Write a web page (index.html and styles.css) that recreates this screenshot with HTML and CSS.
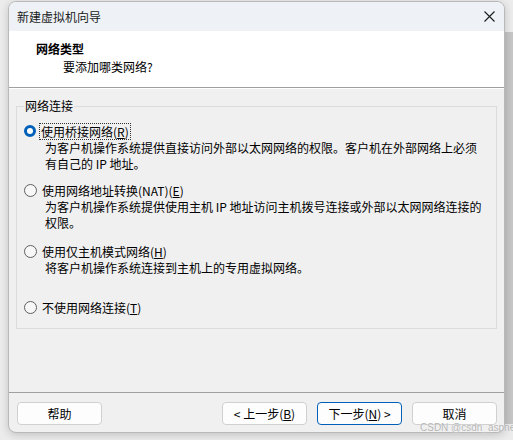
FILE: index.html
```html
<!DOCTYPE html>
<html lang="zh">
<head>
<meta charset="utf-8">
<link rel="stylesheet" href="styles.css">
</head>
<body>
<div class="backdrop-strip"></div>
<div class="dialog">
  <div class="titlebar">
    <span class="title">新建虚拟机向导</span>
    <svg class="close" width="11" height="11" viewBox="0 0 11 11"><path d="M0.5 0.5 L10.5 10.5 M10.5 0.5 L0.5 10.5" stroke="#1a1a1a" stroke-width="1.1" fill="none"/></svg>
  </div>
  <div class="header">
    <div class="h-title">网络类型</div>
    <div class="h-sub">要添加哪类网络?</div>
  </div>
  <div class="body">
    <fieldset class="group">
      <legend>网络连接</legend>
      <div class="opt opt1">
        <div class="opt-line"><span class="radio checked"></span><span class="label focus">使用桥接网络(<u>R</u>)</span></div>
        <div class="desc">为客户机操作系统提供直接访问外部以太网网络的权限。客户机在外部网络上必须<br>有自己的 IP 地址。</div>
      </div>
      <div class="opt opt2">
        <div class="opt-line"><span class="radio"></span><span class="label">使用网络地址转换(NAT)(<u>E</u>)</span></div>
        <div class="desc">为客户机操作系统提供使用主机 IP 地址访问主机拨号连接或外部以太网网络连接的<br>权限。</div>
      </div>
      <div class="opt opt3">
        <div class="opt-line"><span class="radio"></span><span class="label">使用仅主机模式网络(<u>H</u>)</span></div>
        <div class="desc">将客户机操作系统连接到主机上的专用虚拟网络。</div>
      </div>
      <div class="opt opt4">
        <div class="opt-line"><span class="radio"></span><span class="label">不使用网络连接(<u>T</u>)</span></div>
      </div>
    </fieldset>
  </div>
  <div class="footer">
    <button class="btn">帮助</button>
    <span class="spacer"></span>
    <button class="btn">&lt; 上一步(<u>B</u>)</button>
    <button class="btn default">下一步(<u>N</u>) &gt;</button>
    <button class="btn">取消</button>
  </div>
</div>
<div class="watermark">CSDN @csdn_aspnet</div>
</body>
</html>
```
FILE: styles.css
```css
html, body {
  margin: 0;
  padding: 0;
}
body {
  width: 513px;
  height: 440px;
  background: #ececec;
  font-family: "Noto Sans CJK SC", "Noto Sans", sans-serif;
  font-size: 12px;
  color: #000;
  position: relative;
  overflow: hidden;
}
.backdrop-strip {
  position: absolute;
  left: 500px;
  top: 32px;
  width: 13px;
  height: 392px;
  background: #c6c6c6;
}
.dialog {
  position: relative;
  margin: 1px 0 0 8px;
  width: 495px;
  height: 430px;
  border: 1px solid #b9b9b9;
  border-radius: 8px;
  background: #f0f0f0;
  overflow: hidden;
  display: flex;
  flex-direction: column;
  box-shadow: 0 2px 8px rgba(0,0,0,0.18);
}
.titlebar {
  height: 29px;
  background: #eef2f7;
  display: flex;
  align-items: center;
  padding: 0 9px 0 8px;
  flex: none;
}
.title {
  flex: 1;
  line-height: 16px;
  color: #1a1a1a;
}
.close {
  display: block;
}
.header {
  height: 57px;
  background: #fff;
  border-bottom: 1px solid #a0a0a0;
  box-sizing: border-box;
  flex: none;
  padding: 10px 0 0 27px;
}
.h-title {
  font-weight: bold;
  line-height: 16px;
}
.h-sub {
  line-height: 16px;
  margin: 2px 0 0 27px;
}
.body {
  flex: 1;
  padding: 9px 7px 0 7px;
  border-top: 1px solid #fff;
}
.group {
  margin: 0;
  border: 1px solid #dcdcdc;
  padding: 9px 8px 13px 7px;
}
.group legend {
  padding: 0 1px;
  margin-left: 0;
  line-height: 16px;
}
.opt-line {
  display: flex;
  align-items: center;
  height: 16px;
}
.radio {
  width: 11px;
  height: 11px;
  border: 1px solid #5f5f5f;
  border-radius: 50%;
  background: #f7f7f7;
  flex: none;
  box-sizing: content-box;
}
.radio.checked {
  background: #fff;
  border: 3.5px solid #005fb8;
  width: 6px;
  height: 6px;
}
.label {
  margin-left: 3px;
  line-height: 15px;
  padding: 0 1px;
  border: 1px dotted transparent;
}
.label.focus {
  border-color: #333;
}
.desc {
  margin: 1px 0 0 21px;
  line-height: 16px;
}
.opt2 { margin-top: 10px; }
.opt3 { margin-top: 12px; }
.opt4 { margin-top: 23px; }
.footer {
  flex: none;
  border-top: 1px solid #a0a0a0;
  height: 40px;
  box-sizing: border-box;
  padding: 9px 7px 0 8px;
  display: flex;
  align-items: flex-start;
  gap: 10px;
}
.spacer { flex: 1; }
.btn {
  width: 85px;
  height: 23px;
  background: #fdfdfd;
  border: 1px solid #d0d0d0;
  border-radius: 4px;
  font-family: inherit;
  font-size: 12px;
  color: #000;
  padding: 0;
}
.btn.default {
  border-color: #005fb8;
}
.watermark {
  position: absolute;
  left: 420px;
  top: 422px;
  white-space: nowrap;
  font-family: "Liberation Sans", sans-serif;
  font-size: 10px;
  color: #b4b4b4;
  text-shadow: 0 0 1px #fff;
}
```
